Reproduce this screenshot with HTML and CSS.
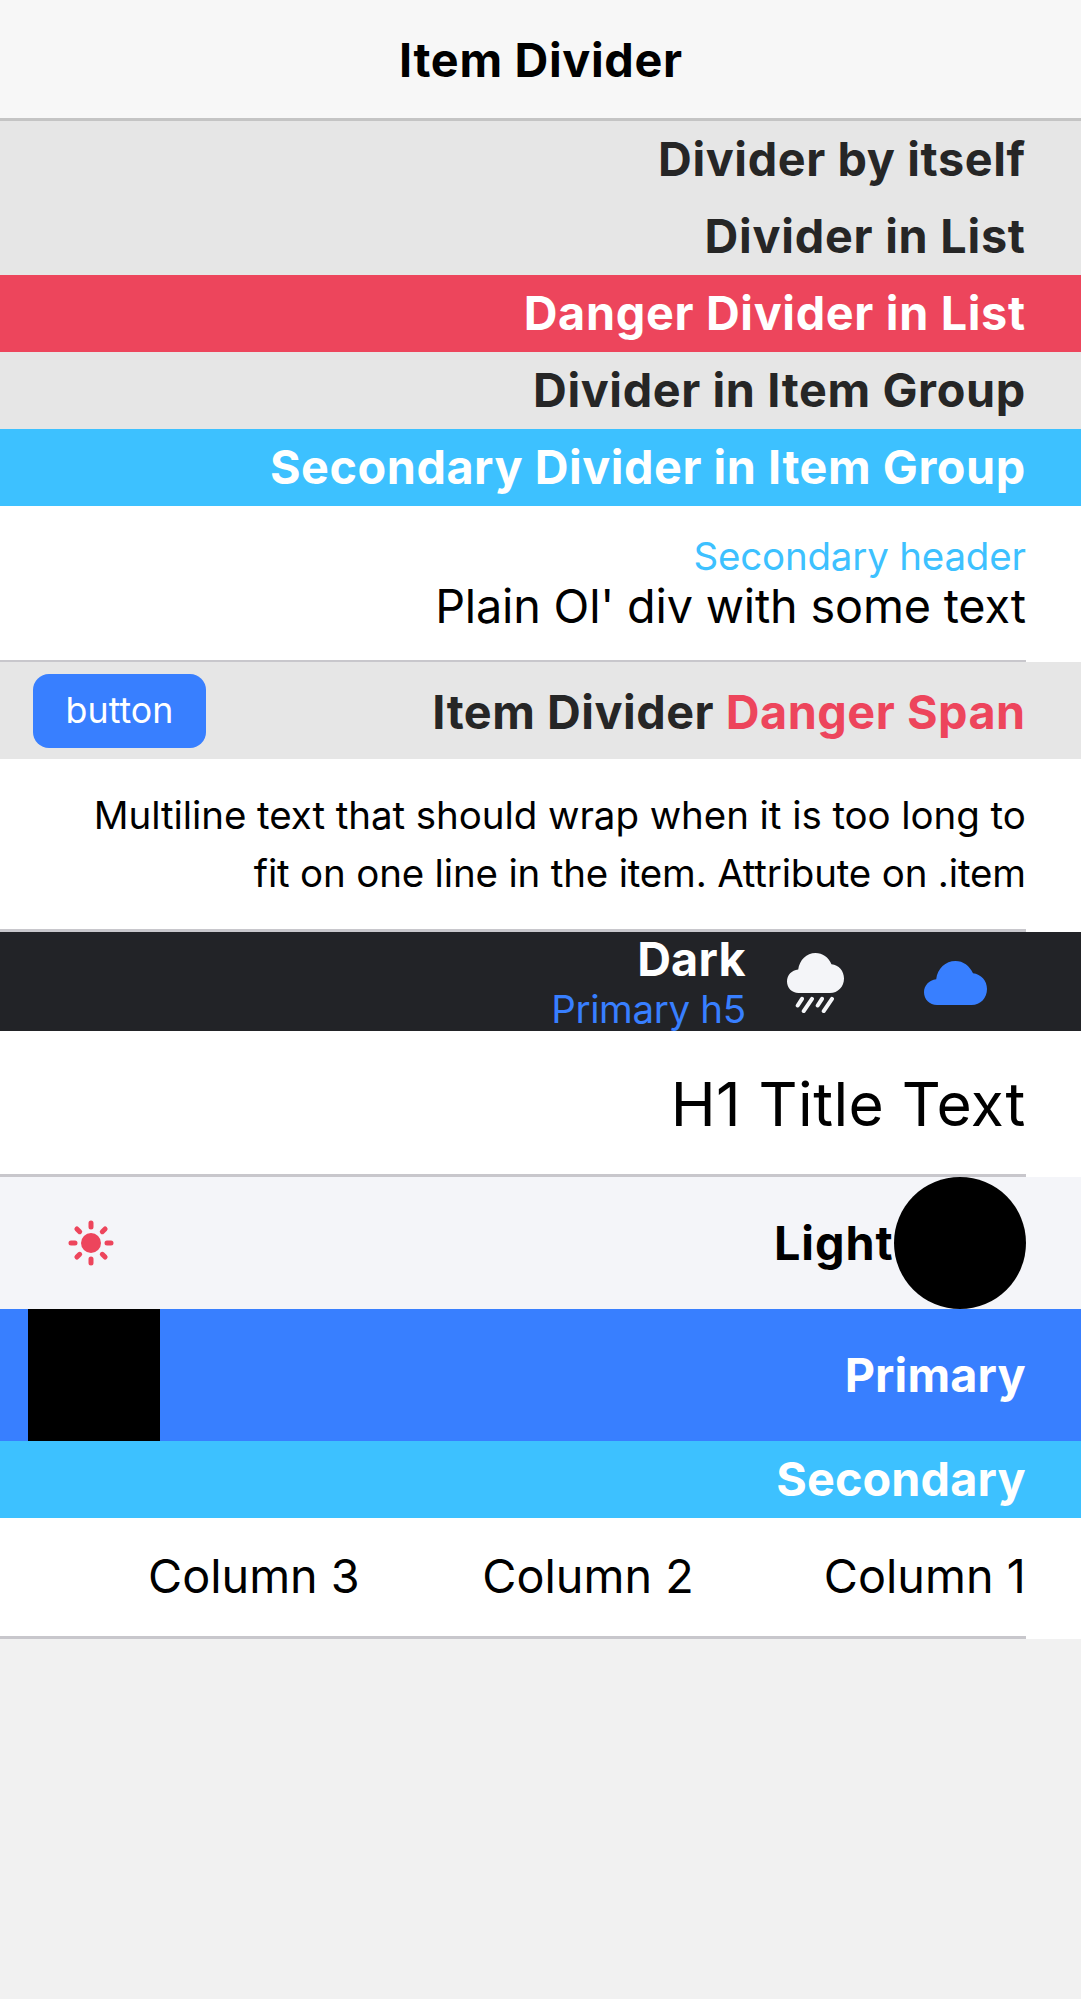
FILE: index.html
```html
<!DOCTYPE html>
<html lang="en">
<head>
<meta charset="utf-8">
<title>Item Divider</title>
<link rel="stylesheet" href="styles.css">
</head>
<body>
<div class="app">
  <header class="toolbar"><h1 class="toolbar-title">Item Divider</h1></header>
  <main>
    <div class="divider"><span>Divider by itself</span></div>
    <div class="divider list-label"><span>Divider in List</span></div>
    <div class="divider danger"><span>Danger Divider in List</span></div>
    <div class="divider"><span>Divider in Item Group</span></div>
    <div class="divider secondary"><span>Secondary Divider in Item Group</span></div>
    <div class="item item-plain"><div class="inner">
      <h5 class="note text-secondary">Secondary header</h5>
      <div class="plain">Plain Ol' div with some text</div>
    </div></div>
    <div class="divider with-button">
      <button class="button" type="button">button</button>
      <span>Item Divider <span class="text-danger">Danger Span</span></span>
    </div>
    <div class="item item-multiline"><div class="inner">
      <p class="multiline">Multiline text that should wrap when it is too long to<br><span class="tight">fit on one line in the item. Attribute on .item</span></p>
    </div></div>
    <div class="divider dark">
      <div class="stack">
        <div class="stack-title">Dark</div>
        <h5 class="note text-primary">Primary h5</h5>
      </div>
      <svg class="icon-rain" viewBox="0 0 57 60" aria-hidden="true">
        <path class="fill-light" d="M11.500 40C5 40 0 35 0 28.500 0 22 4.700 17.200 11.200 16.500 12.500 7 19.500 0 28.500 0 35.500 0 41.500 4.300 44.500 11.200 51.800 12 57 17.800 57 25.500 57 33.700 51 40 43 40Z"/>
        <path class="stroke-light" d="M15 45.800 10.700 52.500M25 45.800 16.700 58M35 45.800 30.700 52.500M45 45.800 36.700 58"/>
      </svg>
      <svg class="icon-cloud" viewBox="0 0 63 44" aria-hidden="true">
        <path class="fill-primary" d="M13 44C5.500 44 0 38.500 0 31.300 0 24.500 5 19 12.200 18.200 13.500 7.500 21.500 0 31.500 0 39.200 0 45.500 4.800 49 12.300 57 13.200 63 19.600 63 28 63 37 56.500 44 47.500 44Z"/>
      </svg>
    </div>
    <div class="item item-title"><div class="inner"><h1 class="title">H1 Title Text</h1></div></div>
    <div class="divider light">
      <svg class="icon-sun" viewBox="0 0 46 46" aria-hidden="true">
        <circle class="fill-danger" cx="23" cy="23" r="10"/>
        <path class="stroke-danger" d="M23 3V7M23 39V43M3 23H7M39 23H43M8.900 8.900 11.700 11.700M34.300 34.300 37.100 37.100M8.900 37.100 11.700 34.300M34.300 11.700 37.100 8.900"/>
      </svg>
      <span class="light-label">Light</span>
      <div class="avatar"></div>
    </div>
    <div class="divider primary">
      <div class="thumbnail"></div>
      <span>Primary</span>
    </div>
    <div class="divider secondary single"><span>Secondary</span></div>
    <div class="item item-columns"><div class="inner columns">
      <div>Column 3</div><div>Column 2</div><div>Column 1</div>
    </div></div>
  </main>
</div>
</body>
</html>
```
FILE: styles.css
```css
* { box-sizing: border-box; }

body {
  margin: 0;
  background: #f1f1f1;
  color: #000;
  font-family: Inter, "Liberation Sans", sans-serif;
  font-size: 46.75px;
}

h1, h5, p { margin: 0; font-weight: 400; }

.app { width: 1080.75px; }

.toolbar {
  display: flex;
  align-items: center;
  justify-content: center;
  height: 121px;
  padding: 2px 0 0 1px;
  background: #f7f7f7;
  border-bottom: 3px solid #c4c4c4;
}

.toolbar-title {
  font-size: 46.75px;
  font-weight: 700;
  line-height: 57px;
  letter-spacing: 0.68px;
}

.divider {
  display: flex;
  align-items: center;
  justify-content: flex-end;
  height: 77px;
  padding: 0 55px 0 33px;
  background: #e6e6e6;
  color: #262626;
  font-weight: 700;
  line-height: 57px;
  letter-spacing: 0.62px;
  white-space: nowrap;
}

.list-label { letter-spacing: 0.76px; }
.danger { background: #ed455c; color: #fff; letter-spacing: 0.67px; }
.secondary { background: #3dc1ff; color: #fff; letter-spacing: 0.54px; }
.single { letter-spacing: 0.15px; }
.primary { height: 132px; padding-left: 27.5px; justify-content: space-between; background: #387fff; color: #fff; letter-spacing: 0.15px; }
.light { height: 132px; padding-left: 68px; background: #f4f5f9; color: #000; letter-spacing: 1px; }
.dark { height: 99px; padding-right: 94px; padding-top: 2px; background: #222327; color: #fff; }
.with-button { height: 97px; justify-content: space-between; letter-spacing: 0.52px; }
.with-button > span { padding-top: 4px; }

.text-secondary { color: #3dc1ff; }
.text-primary { color: #387fff; }
.text-danger { color: #ed455c; }

.item { padding-right: 55px; background: #fff; text-align: right; }
.item .inner {
  display: flex;
  flex-direction: column;
  justify-content: center;
  height: 100%;
  border-bottom: 3px solid #c8c7cc;
}
.item-plain { height: 156px; }
.item-plain .inner { padding-bottom: 1px; border-bottom-width: 2px; }
.item-multiline { height: 173px; }
.item-multiline .inner { padding-bottom: 1px; }
.item-title { height: 146px; }
.item-columns { height: 121px; }

.note { font-size: 38.5px; line-height: 46px; letter-spacing: -0.2px; }
.plain { line-height: 54px; letter-spacing: -0.18px; }
.multiline { font-size: 38.5px; line-height: 58px; letter-spacing: -0.07px; }
.tight { letter-spacing: -0.18px; }
.title { padding-top: 3px; font-size: 60.5px; line-height: 73px; letter-spacing: 0.45px; }

.button {
  width: 173px;
  height: 74px;
  padding: 0 0 1px;
  border: 0;
  border-radius: 16px;
  background: #387fff;
  color: #fff;
  font-family: inherit;
  font-size: 35.75px;
}

.stack { text-align: right; }
.stack-title { line-height: 53px; letter-spacing: 0.2px; }
.stack .note { letter-spacing: -0.35px; }

.icon-rain { width: 57px; height: 60px; margin: 0 80px 0 41px; }
.icon-cloud { width: 63px; height: 44px; }
.icon-sun { width: 46px; height: 46px; margin: 0 auto 1px 0; }

.fill-light { fill: #f4f5f8; }
.fill-primary { fill: #387fff; }
.fill-danger { fill: #ed455c; }
.stroke-light { fill: none; stroke: #f4f5f8; stroke-width: 4; stroke-linecap: round; }
.stroke-danger { fill: none; stroke: #ed455c; stroke-width: 5; stroke-linecap: round; }

.avatar { width: 132px; height: 132px; border-radius: 50%; background: #000; }
.thumbnail { width: 132px; height: 132px; background: #000; }

.item .columns {
  display: grid;
  grid-template-columns: 334px 334px 332px;
  justify-content: end;
  align-content: center;
  padding-bottom: 3px;
}
```
